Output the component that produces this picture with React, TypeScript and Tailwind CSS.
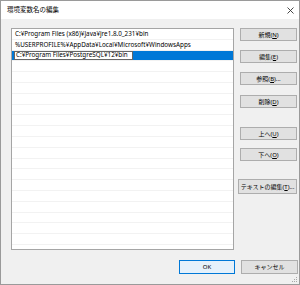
import React from "react";

const FONT = { fontFamily: '"Noto Sans", "Noto Sans CJK JP", sans-serif' };

const rows = [
  "C:¥Program Files (x86)¥Java¥jre1.8.0_231¥bin",
  "%USERPROFILE%¥AppData¥Local¥Microsoft¥WindowsApps",
];

const sideButtons = [
  { label: "新規", key: "N", gap: "mt-0" },
  { label: "編集", key: "E", gap: "mt-[9px]" },
  { label: "参照", key: "B", tail: "...", gap: "mt-[9px]" },
  { label: "削除", key: "D", gap: "mt-[10px]" },
  { label: "上へ", key: "U", gap: "mt-[19px]" },
  { label: "下へ", key: "O", gap: "mt-[8px]" },
  { label: "テキストの編集", key: "T", tail: "...", gap: "mt-[18px]", wide: true },
];

function Btn({
  label,
  k,
  tail,
  className = "",
}: {
  label: string;
  k: string;
  tail?: string;
  className?: string;
}) {
  return (
    <div
      className={`h-[13px] flex items-center justify-center border border-[#adadad] bg-[#e1e1e1] text-[6px] text-black leading-none ${className}`}
    >
      {label}(<span className="underline">{k}</span>){tail}
    </div>
  );
}

export default function App() {
  return (
    <div
      className="w-[300px] h-[285px] bg-[#f0f0f0] border border-[#9a9a9a] flex flex-col relative overflow-hidden"
      style={FONT}
    >
      {/* Title bar */}
      <div className="h-[18px] bg-white flex items-center justify-between pl-[6px] pr-[4px] shrink-0">
        <span className="text-[6.5px] text-black">環境変数名の編集</span>
        <svg width="7" height="7" viewBox="0 0 7 7" className="mr-[1px]">
          <path d="M0.5 0.5 L6.5 6.5 M6.5 0.5 L0.5 6.5" stroke="#333" strokeWidth="0.9" />
        </svg>
      </div>

      {/* Body */}
      <div className="flex pl-[10px] pt-[9px]">
        {/* List */}
        <div className="w-[223px] h-[222px] border border-[#a5a5a5] bg-white overflow-hidden">
          {rows.map((r, i) => (
            <div
              key={i}
              className="h-[10.8px] flex items-center pl-[3px] border-b border-[#f2f2f2] text-[6.3px] text-black leading-none whitespace-nowrap"
            >
              {r}
            </div>
          ))}
          <div className="h-[10.8px] flex items-stretch border-b border-[#f2f2f2] bg-[#0078d7]">
            <div className="ml-[2px] bg-white border border-[#666] flex items-center pl-[1px] pr-[4px] text-[6.3px] text-black leading-none whitespace-nowrap">
              C:¥Program Files¥PostgreSQL¥12¥bin
            </div>
          </div>
          {Array.from({ length: 18 }).map((_, i) => (
            <div key={i} className="h-[10.8px] border-b border-[#f2f2f2]" />
          ))}
        </div>

        {/* Side buttons */}
        <div className="flex flex-col ml-[6px]">
          {sideButtons.map((b, i) => (
            <Btn
              key={i}
              label={b.label}
              k={b.key}
              tail={b.tail}
              className={`${b.gap} ${b.wide ? "w-[59px] -ml-[2px] h-[15px]" : "w-[57px]"}`}
            />
          ))}
        </div>
      </div>

      {/* Footer */}
      <div className="flex justify-end gap-[6px] pr-[1px] mt-[10px]">
        <div className="w-[56px] h-[14px] flex items-center justify-center border border-[#0078d7] bg-[#e5f1fb] text-[6px] text-black leading-none">
          OK
        </div>
        <div className="w-[57px] h-[14px] flex items-center justify-center border border-[#adadad] bg-[#e1e1e1] text-[6px] text-black leading-none">
          キャンセル
        </div>
      </div>

      {/* Resize grip */}
      <svg width="6" height="6" viewBox="0 0 6 6" className="absolute right-[1px] bottom-[1px]">
        <rect x="4" y="0" width="1" height="1" fill="#a8a8a8" />
        <rect x="2" y="2" width="1" height="1" fill="#a8a8a8" />
        <rect x="4" y="2" width="1" height="1" fill="#a8a8a8" />
        <rect x="0" y="4" width="1" height="1" fill="#a8a8a8" />
        <rect x="2" y="4" width="1" height="1" fill="#a8a8a8" />
        <rect x="4" y="4" width="1" height="1" fill="#a8a8a8" />
      </svg>
    </div>
  );
}
